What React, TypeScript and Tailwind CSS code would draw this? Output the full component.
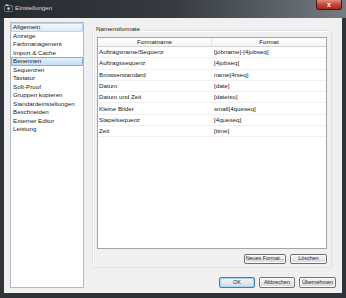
import React from 'react';

const categories = [
  'Allgemein',
  'Anzeige',
  'Farbmanagement',
  'Import & Cache',
  'Benennen',
  'Sequenzen',
  'Tastatur',
  'Soft-Proof',
  'Gruppen kopieren',
  'Standardeinstellungen',
  'Beschneiden',
  'Externer Editor',
  'Leistung',
];

const formats: [string, string][] = [
  ['Auftragsname/Sequenz', '[jobname]-[4jobseq]'],
  ['Auftragssequenz', '[4jobseq]'],
  ['Browserstandard', 'name[4rseq]'],
  ['Datum', '[date]'],
  ['Datum und Zeit', '[dateiso]'],
  ['Kleine Bilder', 'small[4queseq]'],
  ['Stapelsequenz', '[4queseq]'],
  ['Zeit', '[time]'],
];

function WinButton({ label, width, isDefault }: { label: string; width: string; isDefault?: boolean }) {
  return (
    <button
      className={`${width} h-full px-0 whitespace-nowrap overflow-visible rounded-[2px] border text-[5.4px] leading-none text-[#1e1e1e] bg-gradient-to-b from-[#f4f4f4] via-[#e9e9e9] to-[#d6d6d6] ${
        isDefault ? 'border-[#3c7fb1] shadow-[inset_0_0_0_1px_#a9d6f5]' : 'border-[#707070] shadow-[inset_0_0_0_1px_#fbfbfb]'
      }`}
    >
      {label}
    </button>
  );
}

export default function App() {
  return (
    <div
      className="w-[346px] h-[298px] flex flex-col bg-[#2f343a] overflow-hidden"
      style={{ fontFamily: '"Liberation Sans", Arial, sans-serif' }}
    >
      {/* title bar */}
      <div className="h-[18px] flex items-start bg-gradient-to-r from-[#262b30] via-[#353b41] to-[#767c83]">
        <svg width="9" height="8" viewBox="0 0 9 8" className="ml-[4px] mt-[4px]">
          <rect x="0.5" y="1.5" width="8" height="6" rx="1" fill="#1d2226" stroke="#9aa3ab" strokeWidth="0.6" />
          <rect x="1.5" y="0.5" width="3" height="1.5" fill="#c9d2da" />
          <circle cx="4.5" cy="4.6" r="1.8" fill="#3f8fd8" />
          <circle cx="4.5" cy="4.6" r="0.8" fill="#e8f2fb" />
          <rect x="6.6" y="2.3" width="1.2" height="0.9" fill="#e05a2a" />
        </svg>
        <span className="ml-[2px] mt-[4px] text-[6.2px] leading-[8px] text-[#d8dde2]">Einstellungen</span>
        <div className="ml-auto mr-[4px] w-[26px] h-[10px] rounded-b-[3px] border border-t-0 border-[#3a1a1a] bg-gradient-to-b from-[#e08a7e] via-[#c5473a] to-[#a8281e] flex items-center justify-center">
          <span className="text-[7px] leading-none font-bold text-white">x</span>
        </div>
      </div>

      {/* client area */}
      <div className="flex-1 px-[4px] pb-[5px] flex">
        <div className="flex-1 bg-[#f0f0f0] flex text-[6.2px] text-[#222222]">
          {/* category list */}
          <div className="ml-[6px] mt-[4px] mb-[5px] w-[74px] bg-white border border-[#b4b8bd] flex flex-col">
            {categories.map((c) => {
              const hover = c === 'Allgemein';
              const selected = c === 'Benennen';
              return (
                <div
                  key={c}
                  className={`h-[8.5px] shrink-0 flex items-center pl-[1px] rounded-[1px] border ${
                    selected
                      ? 'border-[#84acdd] bg-gradient-to-b from-[#e4effc] to-[#c4dcfa]'
                      : hover
                        ? 'border-[#b8d6fb] bg-gradient-to-b from-[#f2f8fe] to-[#dbeafc]'
                        : 'border-transparent'
                  }`}
                >
                  <span className="leading-none whitespace-nowrap">{c}</span>
                </div>
              );
            })}
          </div>

          {/* right side */}
          <div className="flex-1 ml-[8px] mr-[6px] mt-[12px] mb-[5px] flex flex-col">
            <div className="relative flex-1 mr-[4px] border border-[#dde3e8] rounded-[2px] shadow-[inset_1px_1px_0_#ffffff] pt-[6px] px-[4px] pb-[3px] flex flex-col">
              <span className="absolute -top-[6px] left-[2px] px-[1px] bg-[#f0f0f0] leading-[8px]">Namensformate</span>

              <div className="flex-1 bg-white border border-[#a0a5ab] flex flex-col">
                <div className="h-[9px] shrink-0 grid grid-cols-[114px_1fr] border-b border-[#d5d5d5] bg-gradient-to-b from-[#ffffff] to-[#f3f4f6]">
                  <div className="flex items-center justify-center border-r border-[#e3e5e8] leading-none">Formatname</div>
                  <div className="flex items-center justify-center leading-none">Format</div>
                </div>
                {formats.map(([name, fmt]) => (
                  <div key={name} className="h-[11.3px] shrink-0 grid grid-cols-[114px_1fr] border-b border-[#f0f0f0]">
                    <div className="flex items-center pl-[1px] leading-none whitespace-nowrap">{name}</div>
                    <div className="flex items-center pl-[2px] leading-none whitespace-nowrap">{fmt}</div>
                  </div>
                ))}
              </div>

              <div className="mt-[5px] h-[10px] flex justify-end gap-[4px]">
                <WinButton label="Neues Format..." width="w-[42px]" />
                <WinButton label="Löschen" width="w-[37px]" />
              </div>
            </div>

            <div className="mt-[9px] h-[11px] flex justify-end gap-[4px]">
              <WinButton label="OK" width="w-[36px]" isDefault />
              <WinButton label="Abbrechen" width="w-[36px]" />
              <WinButton label="Übernehmen" width="w-[37px]" />
            </div>
          </div>
        </div>
      </div>
    </div>
  );
}
